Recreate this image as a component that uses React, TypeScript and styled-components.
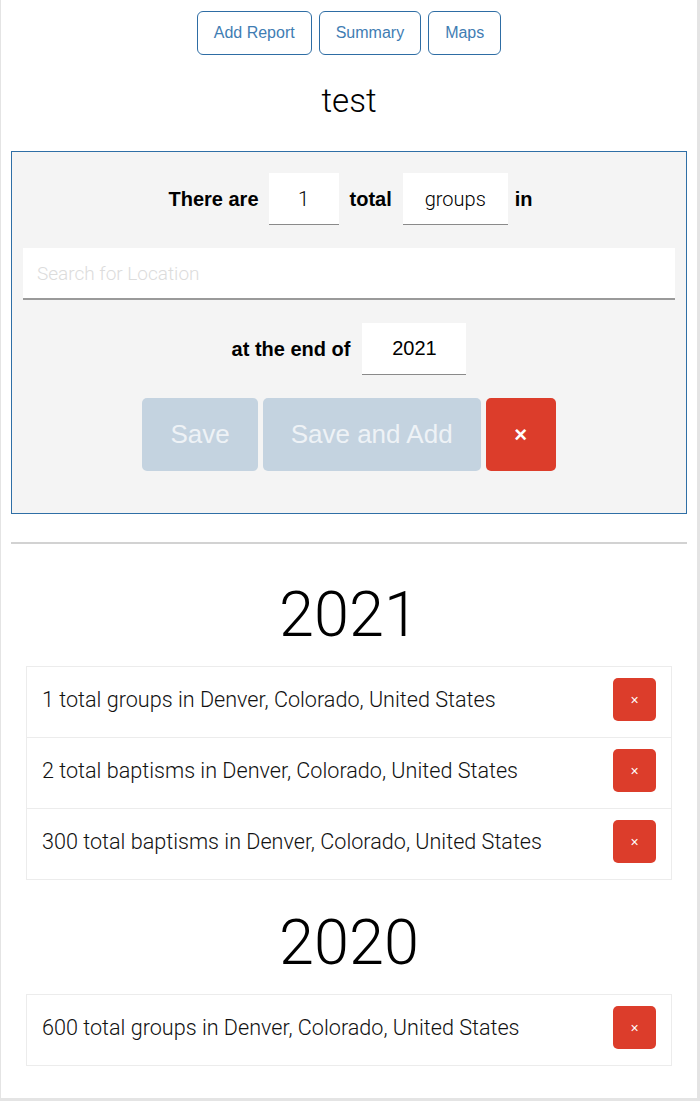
import React from "react";
import styled, { createGlobalStyle } from "styled-components";

const GlobalStyle = createGlobalStyle`
    html, body {
        margin: 0;
        padding: 0;
        background: #ffffff;
    }

    body {
        font-family: "Liberation Sans", Arial, sans-serif;
        color: #000000;
    }

    * {
        box-sizing: border-box;
    }
`;

const Page = styled("div")`
    width: 700px;
    min-height: 1101px;
    border-left: 1px solid #e4e4e4;
    border-right: 3px solid #e4e4e4;
    border-bottom: 3px solid #e4e4e4;
    padding: 11px 10px 31px 10px;
`;

const Nav = styled("nav")`
    display: flex;
    justify-content: center;
    gap: 7px;
`;

const NavButton = styled("button")`
    height: 44px;
    padding: 0 16px;
    background: #ffffff;
    border: 1px solid #2e6da4;
    border-radius: 6px;
    color: #3f7db3;
    font-family: "Liberation Sans", Arial, sans-serif;
    font-size: 16px;
    cursor: pointer;
`;

const Title = styled("h1")`
    margin: 26px 0 30px 0;
    text-align: center;
    font-family: Roboto, "Liberation Sans", sans-serif;
    font-weight: 300;
    font-size: 33px;
    line-height: 40px;
`;

const FormBox = styled("form")`
    display: flex;
    flex-direction: column;
    gap: 23px;
    background: #f4f4f4;
    border: 1px solid #2f6fa6;
    padding: 21px 11px 42px 11px;
`;

const SentenceRow = styled("div")<{ $gap?: number }>`
    display: flex;
    justify-content: center;
    align-items: center;
    gap: ${(p) => p.$gap ?? 7}px;
`;

const Label = styled("span")<{ $space?: number }>`
    font-size: 20px;
    font-weight: 700;
    margin: 0 ${(p) => p.$space ?? 4}px;
`;

const Field = styled("input")<{ $width: number; $light?: boolean }>`
    width: ${(p) => p.$width}px;
    height: 52px;
    border: none;
    border-bottom: 1px solid #8a8a8a;
    background: #ffffff;
    text-align: center;
    font-family: ${(p) => (p.$light ? "Roboto, " : "")}"Liberation Sans", sans-serif;
    font-weight: ${(p) => (p.$light ? 300 : 400)};
    font-size: 20px;
    color: #000000;
    outline: none;
`;

const SearchField = styled("input")`
    width: 100%;
    height: 52px;
    border: none;
    border-bottom: 2px solid #9a9a9a;
    background: #ffffff;
    padding: 0 14px;
    font-family: Roboto, "Liberation Sans", sans-serif;
    font-weight: 300;
    font-size: 19px;
    outline: none;

    &::placeholder {
        color: #dcdcdc;
    }
`;

const ActionRow = styled("div")`
    display: flex;
    justify-content: center;
    gap: 5px;
`;

const SaveButton = styled("button")`
    height: 73px;
    padding: 0 28px;
    border: none;
    border-radius: 5px;
    background: #c4d3e0;
    color: #eef2f6;
    font-family: "Liberation Sans", Arial, sans-serif;
    font-size: 26px;
`;

const CloseButton = styled("button")<{ $large?: boolean }>`
    width: ${(p) => (p.$large ? 70 : 43)}px;
    height: ${(p) => (p.$large ? 73 : 43)}px;
    flex-shrink: 0;
    display: flex;
    align-items: center;
    justify-content: center;
    border: none;
    border-radius: 5px;
    background: #dc3d2b;
    color: #ffffff;
    font-family: "Liberation Sans", Arial, sans-serif;
    font-size: ${(p) => (p.$large ? 22 : 14)}px;
    font-weight: ${(p) => (p.$large ? 700 : 400)};
    padding: 0;
    cursor: pointer;
`;

const Divider = styled("hr")`
    margin: 28px 0 38px 0;
    border: none;
    border-top: 2px solid #d2d2d2;
`;

const YearHeading = styled("h2")`
    margin: 31px 0 18px 0;
    text-align: center;
    font-family: Roboto, "Liberation Sans", sans-serif;
    font-weight: 300;
    font-size: 63px;
    line-height: 66px;
`;

const List = styled("ul")`
    list-style: none;
    margin: 0 15px;
    padding: 0;
`;

const Item = styled("li")`
    display: flex;
    align-items: center;
    justify-content: space-between;
    border: 1px solid #ececec;
    margin-bottom: -1px;
    padding: 11px 15px 16px 15px;
`;

const ItemText = styled("span")`
    font-family: Roboto, "Liberation Sans", sans-serif;
    font-weight: 300;
    font-size: 21.6px;
    color: #111111;
`;

const reports = [
    {
        year: "2021",
        items: [
            "1 total groups in Denver, Colorado, United States",
            "2 total baptisms in Denver, Colorado, United States",
            "300 total baptisms in Denver, Colorado, United States",
        ],
    },
    {
        year: "2020",
        items: ["600 total groups in Denver, Colorado, United States"],
    },
];

const App = () => {
    return (
        <>
            <GlobalStyle />
            <Page>
                <Nav>
                    <NavButton>Add Report</NavButton>
                    <NavButton>Summary</NavButton>
                    <NavButton>Maps</NavButton>
                </Nav>
                <Title>test</Title>
                <FormBox onSubmit={(e) => e.preventDefault()}>
                    <SentenceRow>
                        <Label $space={3}>There are</Label>
                        <Field $width={70} $light defaultValue="1" />
                        <Label>total</Label>
                        <Field $width={105} $light defaultValue="groups" />
                        <Label $space={0}>in</Label>
                    </SentenceRow>
                    <SearchField placeholder="Search for Location" />
                    <SentenceRow $gap={12}>
                        <Label $space={0}>at the end of</Label>
                        <Field $width={104} defaultValue="2021" />
                    </SentenceRow>
                    <ActionRow>
                        <SaveButton type="button" disabled>Save</SaveButton>
                        <SaveButton type="button" disabled>Save and Add</SaveButton>
                        <CloseButton type="button" $large>×</CloseButton>
                    </ActionRow>
                </FormBox>
                <Divider />
                {reports.map((group) => (
                    <section key={group.year}>
                        <YearHeading>{group.year}</YearHeading>
                        <List>
                            {group.items.map((text) => (
                                <Item key={text}>
                                    <ItemText>{text}</ItemText>
                                    <CloseButton type="button">×</CloseButton>
                                </Item>
                            ))}
                        </List>
                    </section>
                ))}
            </Page>
        </>
    );
};

export default App;
